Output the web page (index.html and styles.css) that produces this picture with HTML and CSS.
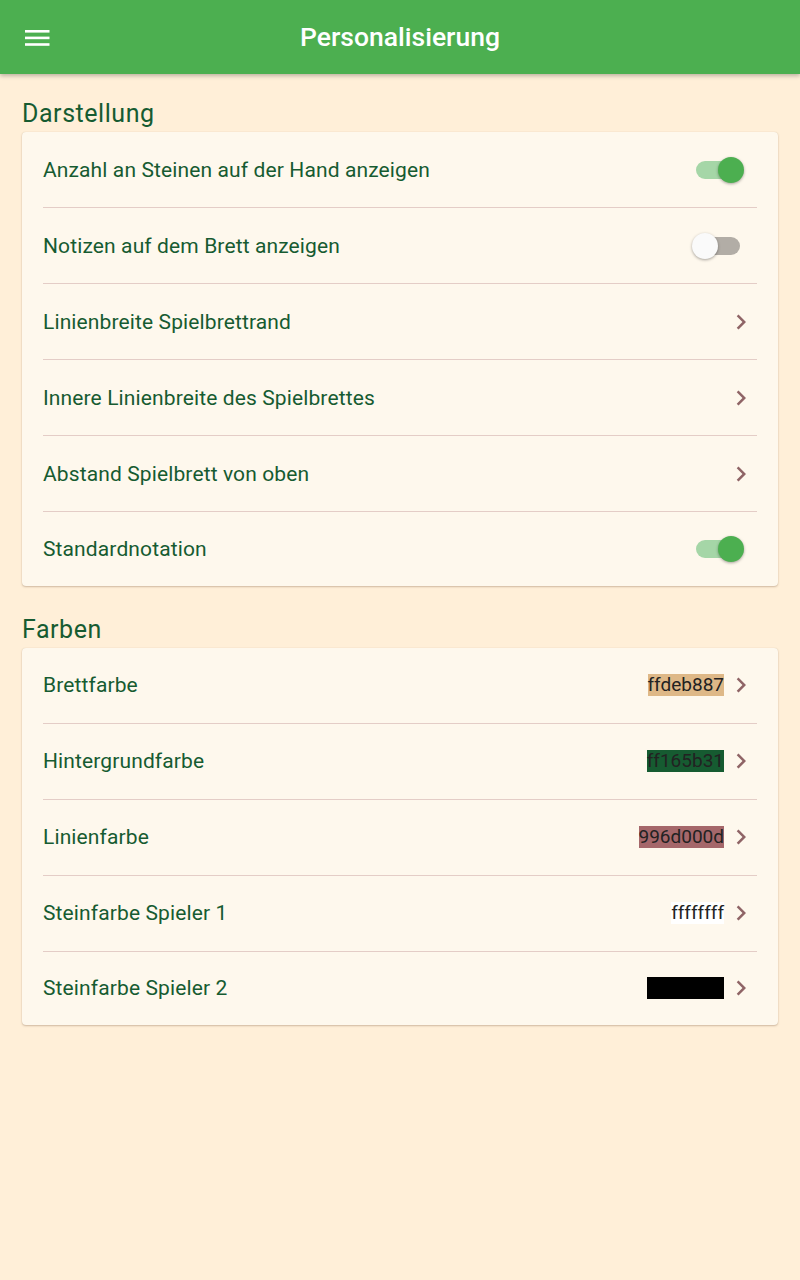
FILE: index.html
```html
<!DOCTYPE html>
<html lang="de">
<head>
<meta charset="utf-8">
<title>Personalisierung</title>
<link rel="stylesheet" href="styles.css">
</head>
<body>
<header class="appbar">
  <button class="menu" aria-label="Menü">
    <svg width="26" height="24" viewBox="0 0 26 24"><rect x="0" y="5" width="24.5" height="2.6" fill="#fff"/><rect x="0" y="11.6" width="24.5" height="2.6" fill="#fff"/><rect x="0" y="18.2" width="24.5" height="2.6" fill="#fff"/></svg>
  </button>
  <h1 class="title">Personalisierung</h1>
</header>
<main class="content">
  <h2 class="section">Darstellung</h2>
  <div class="card">
    <div class="row"><span class="label">Anzahl an Steinen auf der Hand anzeigen</span><span class="switch on"><span class="knob"></span></span></div>
    <div class="row"><span class="label">Notizen auf dem Brett anzeigen</span><span class="switch"><span class="knob"></span></span></div>
    <div class="row"><span class="label">Linienbreite Spielbrettrand</span><span class="chev"><svg width="30" height="30" viewBox="0 0 24 24"><path d="M10 6 8.59 7.41 13.17 12l-4.58 4.59L10 18l6-6z"/></svg></span></div>
    <div class="row"><span class="label">Innere Linienbreite des Spielbrettes</span><span class="chev"><svg width="30" height="30" viewBox="0 0 24 24"><path d="M10 6 8.59 7.41 13.17 12l-4.58 4.59L10 18l6-6z"/></svg></span></div>
    <div class="row"><span class="label">Abstand Spielbrett von oben</span><span class="chev"><svg width="30" height="30" viewBox="0 0 24 24"><path d="M10 6 8.59 7.41 13.17 12l-4.58 4.59L10 18l6-6z"/></svg></span></div>
    <div class="row"><span class="label">Standardnotation</span><span class="switch on"><span class="knob"></span></span></div>
  </div>
  <h2 class="section">Farben</h2>
  <div class="card">
    <div class="row"><span class="label">Brettfarbe</span><span class="trail"><span class="swatch c1">ffdeb887</span><span class="chev"><svg width="30" height="30" viewBox="0 0 24 24"><path d="M10 6 8.59 7.41 13.17 12l-4.58 4.59L10 18l6-6z"/></svg></span></span></div>
    <div class="row"><span class="label">Hintergrundfarbe</span><span class="trail"><span class="swatch c2">ff165b31</span><span class="chev"><svg width="30" height="30" viewBox="0 0 24 24"><path d="M10 6 8.59 7.41 13.17 12l-4.58 4.59L10 18l6-6z"/></svg></span></span></div>
    <div class="row"><span class="label">Linienfarbe</span><span class="trail"><span class="swatch c3">996d000d</span><span class="chev"><svg width="30" height="30" viewBox="0 0 24 24"><path d="M10 6 8.59 7.41 13.17 12l-4.58 4.59L10 18l6-6z"/></svg></span></span></div>
    <div class="row"><span class="label">Steinfarbe Spieler 1</span><span class="trail"><span class="swatch c4">ffffffff</span><span class="chev"><svg width="30" height="30" viewBox="0 0 24 24"><path d="M10 6 8.59 7.41 13.17 12l-4.58 4.59L10 18l6-6z"/></svg></span></span></div>
    <div class="row"><span class="label">Steinfarbe Spieler 2</span><span class="trail"><span class="swatch c5">ff000000</span><span class="chev"><svg width="30" height="30" viewBox="0 0 24 24"><path d="M10 6 8.59 7.41 13.17 12l-4.58 4.59L10 18l6-6z"/></svg></span></span></div>
  </div>
</main>
</body>
</html>
```
FILE: styles.css
```css
html, body {
  margin: 0;
  padding: 0;
}
body {
  background: #ffefd8;
  font-family: Roboto, "Noto Sans", sans-serif;
  color: #165b31;
  min-height: 1280px;
}
.appbar {
  height: 74px;
  background: #4caf50;
  box-shadow: 0 2px 4px rgba(0,0,0,0.25);
  position: relative;
  display: flex;
  align-items: center;
  justify-content: center;
}
.menu {
  position: absolute;
  left: 25px;
  top: 25px;
  width: 26px;
  height: 24px;
  padding: 0;
  border: 0;
  background: none;
  display: block;
}
.menu svg { display: block; }
.title {
  margin: 0 0 1px 0;
  color: #fff;
  font-size: 26.5px;
  font-weight: 500;
  letter-spacing: 0;
}
.content {
  padding: 0 22px;
}
.section {
  margin: 0;
  font-size: 25px;
  font-weight: 400;
  line-height: 28px;
  letter-spacing: 0.55px;
  padding: 26px 0 4px 0;
  color: #165b31;
}
.card + .section { padding-top: 30px; }
.card {
  background: #fef8ed;
  border-radius: 4px;
  box-shadow: 0 1px 2px rgba(120,90,60,0.35), 0 0 1px rgba(120,90,60,0.2);
  padding: 0 21px;
}
.row {
  height: 75px;
  display: flex;
  align-items: center;
  justify-content: space-between;
  border-bottom: 1px solid #e4cdc7;
}
.row:last-child { border-bottom: 0; height: 73.5px; }
.label {
  font-size: 21px;
  letter-spacing: 0.12px;
  color: #165b31;
}
.chev {
  width: 30px;
  height: 30px;
  display: block;
  margin-right: 1px;
}
.chev svg { display: block; fill: #8f6466; }
.trail {
  display: flex;
  align-items: center;
}
.swatch {
  font-size: 19px;
  line-height: 22px;
  height: 22px;
  min-width: 76px;
  text-align: right;
  color: #222;
  margin-right: 2px;
}
.c1 { background: #deb887; }
.c2 { background: #165b31; }
.c3 { background: #a5676a; }
.c4 { background: #ffffff; min-width: 52px; text-align: center; }
.c5 { background: #000000; color: transparent; }
.switch {
  position: relative;
  width: 44px;
  height: 18px;
  margin-right: 17px;
  border-radius: 9px;
  background: #b2ada6;
}
.switch .knob {
  position: absolute;
  top: -4px;
  left: -4px;
  width: 26px;
  height: 26px;
  border-radius: 50%;
  background: #fafafa;
  box-shadow: 0 1px 3px rgba(0,0,0,0.35);
}
.switch.on { background: #a5d6a7; }
.switch.on .knob {
  left: 22px;
  background: #4caf50;
}
```
